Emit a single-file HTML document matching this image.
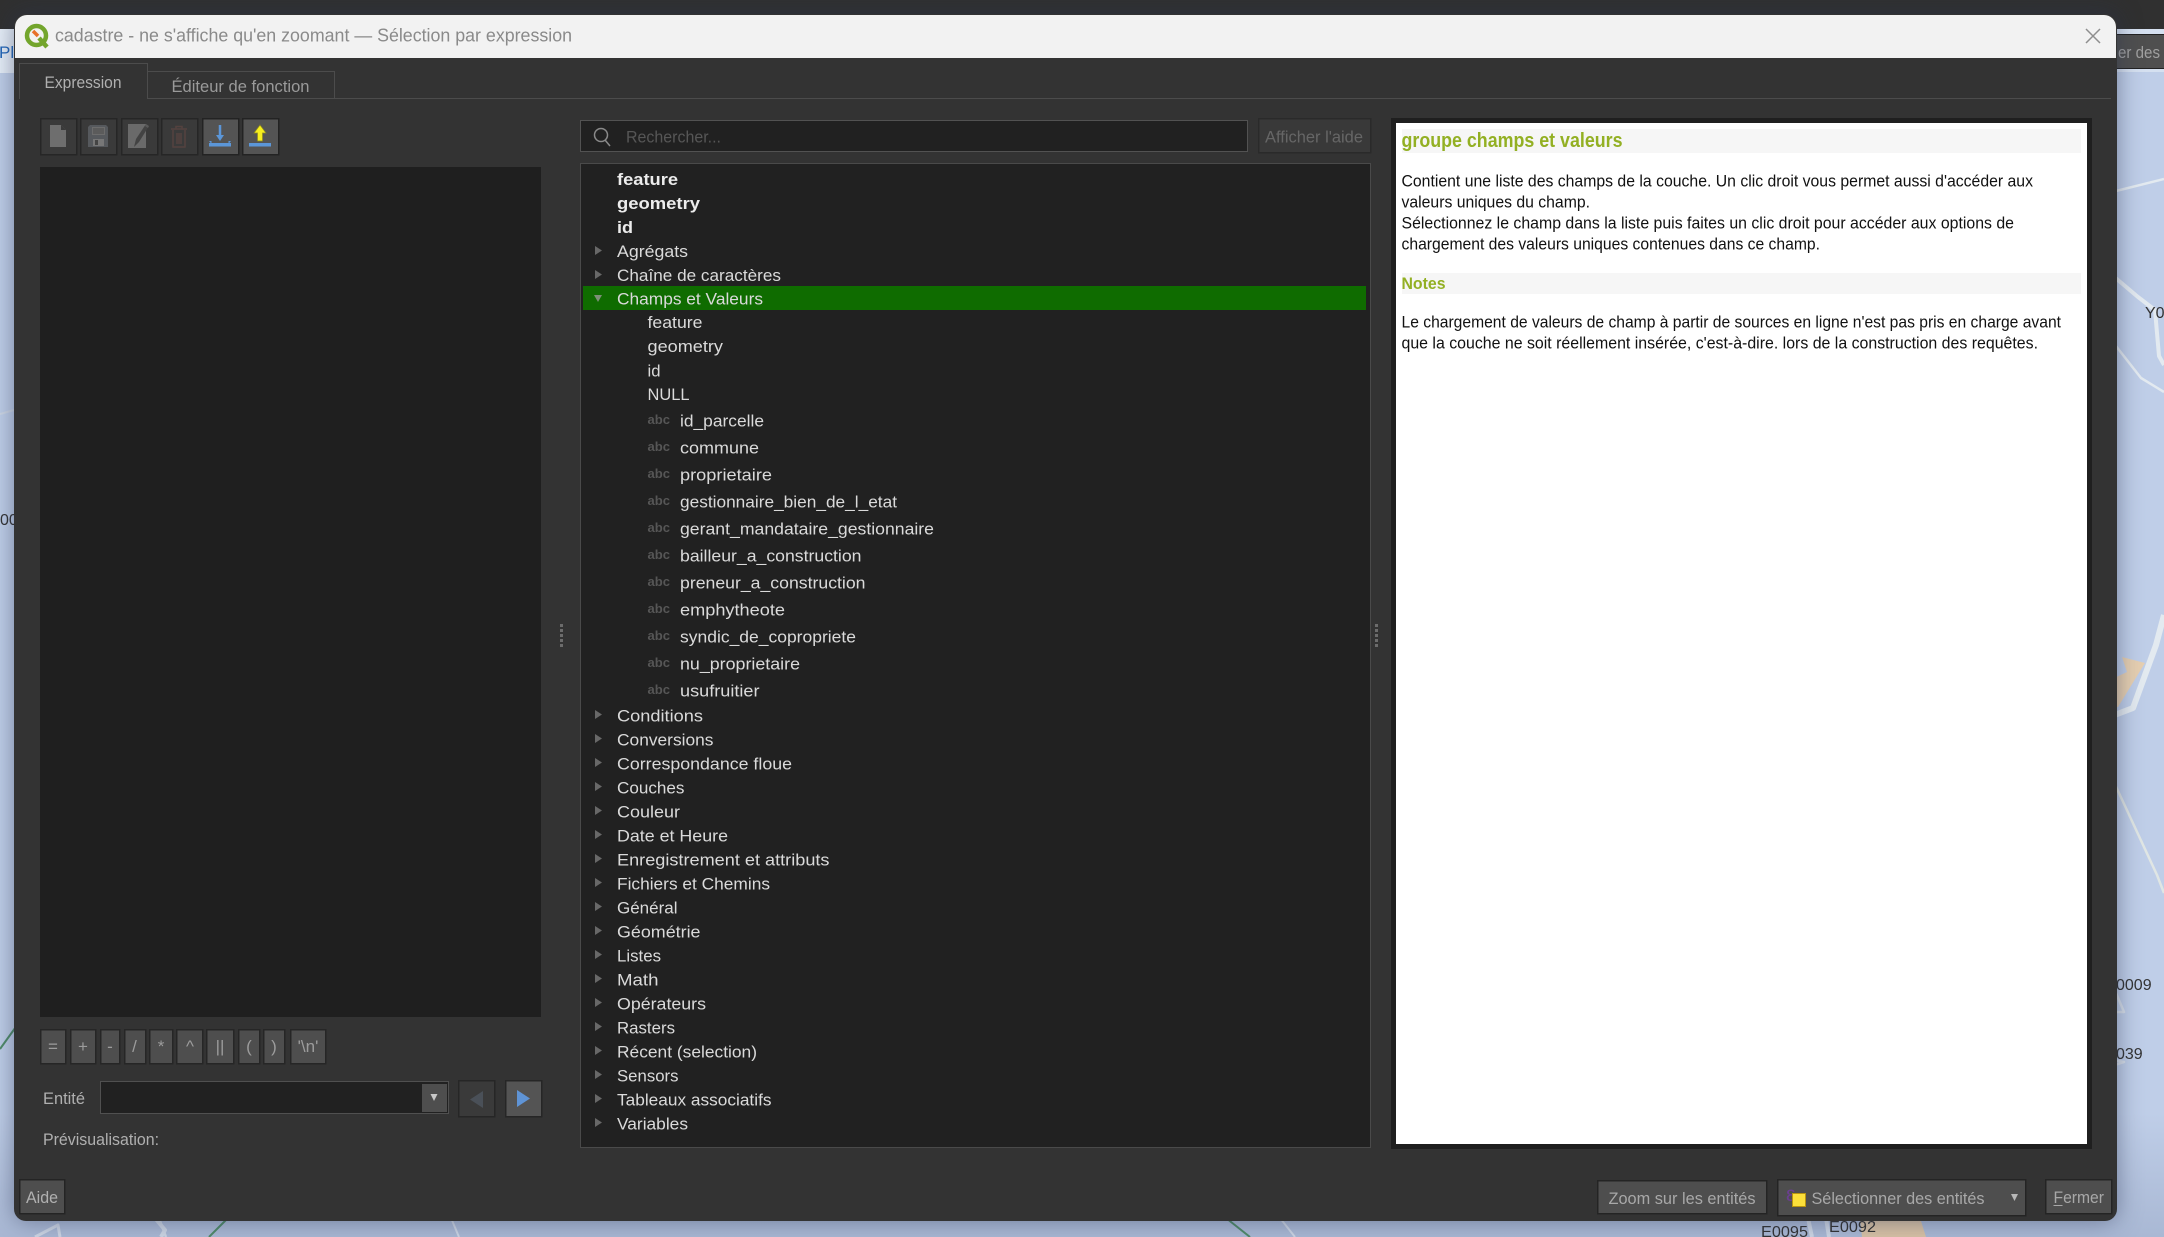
<!DOCTYPE html>
<html lang="fr">
<head>
<meta charset="utf-8">
<title>Sélection par expression</title>
<style>
html,body{margin:0;padding:0;width:2164px;height:1237px;overflow:hidden;background:#c2d1ea}
svg{position:absolute;left:0;top:0;display:block}
#win{position:absolute;left:14px;top:14px;width:2103px;height:1207px;border-radius:12px 12px 12px 12px;background:#333;box-shadow:0 0 24px rgba(40,50,80,.5)}
text{font-family:"Liberation Sans",sans-serif;white-space:pre}
.t{font-size:17px;fill:#dadada}
.b{font-size:17px;fill:#ececec;font-weight:bold}
.abc{font-size:12.5px;fill:#565656;font-weight:bold}
.h{font-size:16.5px;fill:#111}
.u{font-size:17px;fill:#b0b0b0}
.op{font-size:17px;fill:#9c9c9c}
.crisp rect{shape-rendering:crispEdges}
</style>
</head>
<body>
<svg width="2164" height="1237" viewBox="0 0 2164 1237" xmlns="http://www.w3.org/2000/svg">
  <defs>
    <linearGradient id="mb" x1="0" y1="0" x2="0" y2="1"><stop offset="0" stop-color="#bfcee8"/><stop offset=".9" stop-color="#bfcee8"/><stop offset="1" stop-color="#a9b8d4"/></linearGradient>
  </defs>
  <rect width="2164" height="1237" fill="url(#mb)"/>
  <rect width="2164" height="30" fill="#303030"/>
  <rect x="0" y="29" width="14" height="44" fill="#e6eef8"/>
  <text x="-1" y="58" font-size="17" fill="#2266b8">Pl</text>
  <rect x="2117" y="29" width="47" height="43" fill="#d5e0f0"/>
  <rect x="2117" y="34" width="47" height="35" fill="#4f4f4f"/>
  <rect x="2117" y="34" width="47" height="1" fill="#222"/>
  <rect x="2117" y="68" width="47" height="1" fill="#222"/>
  <text x="2118" y="58" font-size="17" fill="#a0a0a0" textLength="42" lengthAdjust="spacingAndGlyphs">er des</text>
  <g fill="none" stroke="#e3eaf0" stroke-linejoin="round">
    <path d="M2112 192L2164 179" stroke-width="2.500"/>
    <path d="M2112 275L2138 297L2155 310L2159 356L2164 365" stroke-width="4"/>
    <path d="M2112 341L2141 378L2164 392" stroke-width="2.500"/>
    <path d="M2164 615L2156 645L2133 708L2112 716" stroke-width="6"/>
    <path d="M2112 778L2157 875L2164 893" stroke-width="2.500" stroke="#e0e6e4"/>
    <path d="M2116 993L2124 1012L2112 1012" stroke-width="2.500" stroke="#d8e0ea"/>
    <path d="M2112 1060L2124 1062L2112 1066" stroke-width="2.500" stroke="#d8e0ea"/>
  </g>
  <g fill="none" stroke="#cdd6e4" stroke-linejoin="round">
    <path d="M159 1218L166 1237" stroke-width="2.500"/>
    <path d="M451 1218L459 1237" stroke-width="2"/>
    <path d="M1280 1218L1295 1237" stroke-width="2"/>
    <path d="M35 1237L58 1225L60 1237" stroke-width="3"/>
    <path d="M155 1218L165 1230L161 1237" stroke-width="4"/>
    <path d="M0 414L14 410" stroke-width="2"/>
    <path d="M1808 1218L1812 1237M1826 1218L1829 1237" stroke-width="4"/>
  </g>
  <polygon points="2122,657 2145,663 2118,707 2110,707 2110,680 2127,672" fill="#e6cfb1"/>
  <polygon points="1860,1218 1920,1218 1926,1237 1862,1237" fill="#d8c2a6"/>
  <g fill="none" stroke="#4f8b68" stroke-width="2">
    <path d="M0 1049L18 1024"/>
    <path d="M228 1218L209 1237"/>
    <path d="M1226 1218L1250 1237"/>
  </g>
  <g fill="#333">
    <text x="0" y="525" font-size="16">00</text>
    <text x="2145" y="318" font-size="16">Y0</text>
    <text x="2116" y="990" font-size="16">0009</text>
    <text x="2116" y="1059" font-size="16">039</text>
    <text x="1761" y="1237" font-size="16" textLength="47" lengthAdjust="spacingAndGlyphs">E0095</text>
    <text x="1829" y="1232" font-size="16" textLength="47" lengthAdjust="spacingAndGlyphs">E0092</text>
  </g>
</svg>

<div id="win"></div>

<svg width="2164" height="1237" viewBox="0 0 2164 1237" xmlns="http://www.w3.org/2000/svg">
  <!-- title bar -->
  <path d="M15 58V27a12 12 0 0 1 12-12H2104a12 12 0 0 1 12 12V58Z" fill="#f2f2f2"/>
  <g fill="none">
    <circle cx="36.500" cy="35.500" r="9.500" stroke="#73a52c" stroke-width="4.500"/>
    <path d="M39 38L47 47" stroke="#73a52c" stroke-width="4.500"/>
    <path d="M33 31L38 36" stroke="#e8702a" stroke-width="3.500"/>
  </g>
  <text x="55" y="41.500" font-size="18" fill="#8a8a8a" textLength="517" lengthAdjust="spacingAndGlyphs">cadastre - ne s'affiche qu'en zoomant — Sélection par expression</text>
  <path d="M2086 29L2100 43M2100 29L2086 43" stroke="#8e8e8e" stroke-width="1.500" fill="none"/>

  <g class="crisp">
    <!-- tabs -->
    <rect x="19" y="98" width="2092" height="1" fill="#4c4c4c"/>
    <rect x="147" y="71" width="187" height="27" fill="#333"/>
    <rect x="147" y="71" width="187" height="1" fill="#4c4c4c"/>
    <rect x="334" y="71" width="1" height="28" fill="#4c4c4c"/>
    <rect x="19" y="63" width="128" height="36" fill="#333"/>
    <rect x="19" y="63" width="128" height="1" fill="#4c4c4c"/>
    <rect x="19" y="63" width="1" height="36" fill="#4c4c4c"/>
    <rect x="147" y="63" width="1" height="36" fill="#4c4c4c"/>

    <!-- toolbar -->
    <g fill="#3a3a3a" stroke="#262626" stroke-width="1.500">
      <rect x="40.500" y="118.500" width="36" height="36"/>
      <rect x="80.500" y="118.500" width="36" height="36"/>
      <rect x="121.500" y="118.500" width="36" height="36"/>
      <rect x="161.500" y="118.500" width="36" height="36"/>
    </g>
    <g fill="#545454" stroke="#232323" stroke-width="1.500">
      <rect x="202.500" y="118.500" width="36" height="36"/>
      <rect x="242.500" y="118.500" width="36" height="36"/>
    </g>

    <!-- editor -->
    <rect x="40" y="167" width="501" height="850" fill="#1f1f1f"/>

    <!-- operators -->
    <g fill="#4e4e4e" stroke="#262626" stroke-width="1.500">
      <rect x="40.500" y="1029.500" width="25" height="34"/>
      <rect x="70.500" y="1029.500" width="25" height="34"/>
      <rect x="100.500" y="1029.500" width="19" height="34"/>
      <rect x="124.500" y="1029.500" width="21" height="34"/>
      <rect x="149.500" y="1029.500" width="23" height="34"/>
      <rect x="176.500" y="1029.500" width="26" height="34"/>
      <rect x="206.500" y="1029.500" width="27" height="34"/>
      <rect x="238.500" y="1029.500" width="21" height="34"/>
      <rect x="263.500" y="1029.500" width="21" height="34"/>
      <rect x="290.500" y="1029.500" width="35" height="34"/>
    </g>

    <!-- combo -->
    <rect x="100.500" y="1081.500" width="348" height="32" fill="#212121" stroke="#505050"/>
    <rect x="422" y="1084" width="25" height="28" fill="#4e4e4e"/>
    <rect x="458.500" y="1080.500" width="36" height="36" fill="#3a3a3a" stroke="#262626" stroke-width="1.500"/>
    <rect x="505.500" y="1080.500" width="36" height="36" fill="#545454" stroke="#262626" stroke-width="1.500"/>

    <!-- search -->
    <rect x="580.500" y="120.500" width="667" height="31" fill="#212121" stroke="#525252"/>
    <rect x="1258.500" y="118.500" width="112" height="34" fill="#393939" stroke="#2a2a2a" stroke-width="1.500"/>

    <!-- tree -->
    <rect x="580.500" y="163.500" width="790" height="984" fill="#212121" stroke="#4a4a4a"/>
    <rect x="583" y="286" width="783" height="24" fill="#0f6c00"/>

    <!-- help -->
    <rect x="1391" y="118" width="701" height="1031" fill="#1f1f1f"/>
    <rect x="1396" y="123" width="691" height="1021" fill="#fff"/>
    <rect x="1402" y="129" width="679" height="24" fill="#f6f6f6"/>
    <rect x="1402" y="273" width="679" height="21" fill="#f6f6f6"/>

    <!-- bottom buttons -->
    <g fill="#4e4e4e" stroke="#242424" stroke-width="1.500">
      <rect x="19.500" y="1179.500" width="45" height="34"/>
      <rect x="1597.500" y="1180.500" width="169" height="33"/>
      <rect x="1777.500" y="1179.500" width="248" height="36"/>
      <rect x="2045.500" y="1179.500" width="66" height="34"/>
    </g>

    <!-- splitters -->
    <g fill="#6c6c6c">
      <rect x="560" y="624" width="3" height="3"/><rect x="560" y="629" width="3" height="3"/><rect x="560" y="634" width="3" height="3"/><rect x="560" y="639" width="3" height="3"/><rect x="560" y="644" width="3" height="3"/>
      <rect x="1375" y="624" width="3" height="3"/><rect x="1375" y="629" width="3" height="3"/><rect x="1375" y="634" width="3" height="3"/><rect x="1375" y="639" width="3" height="3"/><rect x="1375" y="644" width="3" height="3"/>
    </g>
  </g>

  <text x="44.500" y="88" class="u" textLength="77" lengthAdjust="spacingAndGlyphs">Expression</text>
  <text x="171.500" y="92" class="u" style="fill:#9a9a9a" textLength="138" lengthAdjust="spacingAndGlyphs">Éditeur de fonction</text>

  <!-- toolbar icons -->
  <path d="M50 125H61L66 130V147H50Z" fill="#6e6e6e"/>
  <path d="M61 125V130H66Z" fill="#3a3a3a"/>
  <path d="M90 125H106L108 127V147H88V127Z" fill="#56595d"/>
  <rect x="92" y="127" width="13" height="8" fill="#6c6c6c"/>
  <path d="M93 129H104M93 131H104M93 133H104" stroke="#4a4a4a" stroke-width="1"/>
  <rect x="93" y="139" width="11" height="7" fill="#777"/><rect x="95" y="140" width="3" height="5" fill="#444"/>
  <path d="M128 124H146V148H128Z" fill="#6a6a6a"/>
  <path d="M134 147L136 139L146 124L149 126L139 142Z" fill="#434343"/>
  <path d="M146 124L149 126L148 128L145 126Z" fill="#5a5a5a"/>
  <g fill="none" stroke="#54423f" stroke-width="1.500">
    <path d="M171 129H187M176 129V126.500H182V129"/>
    <path d="M173 130V147H185V130"/>
    <path d="M177 133V144M179 133V144M181 133V144"/>
  </g>
  <path d="M220 125V139" stroke="#5b96d8" stroke-width="2.500"/>
  <path d="M216 135L220 141L224 135Z" fill="#5b96d8"/>
  <path d="M209 143H231V146.500H209Z" fill="#5b96d8"/>
  <path d="M209 141H211.500V144M231 141H228.500V144" fill="#5b96d8"/>
  <path d="M260 125L266 133H262.500V141H257.500V133H254Z" fill="#f6ee1e" stroke="#8f8a20" stroke-width=".7"/>
  <path d="M249 143H271V146.500H249Z" fill="#5b96d8"/>

  <!-- operators -->
  <g class="op" text-anchor="middle">
    <text x="53" y="1052" class="op" text-anchor="middle">=</text>
    <text x="83" y="1052" class="op" text-anchor="middle">+</text>
    <text x="110" y="1052" class="op" text-anchor="middle">-</text>
    <text x="134.500" y="1052" class="op" text-anchor="middle">/</text>
    <text x="161" y="1052" class="op" text-anchor="middle">*</text>
    <text x="190" y="1052" class="op" text-anchor="middle">^</text>
    <text x="220" y="1052" class="op" text-anchor="middle">||</text>
    <text x="249" y="1052" class="op" text-anchor="middle">(</text>
    <text x="274" y="1052" class="op" text-anchor="middle">)</text>
    <text x="308" y="1052" class="op" text-anchor="middle">'\n'</text>
  </g>

  <text x="43" y="1104" class="u" textLength="42" lengthAdjust="spacingAndGlyphs">Entité</text>
  <text x="43" y="1145" class="u" textLength="116" lengthAdjust="spacingAndGlyphs">Prévisualisation:</text>
  <path d="M430.500 1094H437.500L434 1101Z" fill="#c8c8c8"/>
  <path d="M483 1091V1108L470 1099.500Z" fill="#4a5058"/>
  <path d="M517 1090V1107L530 1098.500Z" fill="#5f94d6"/>

  <!-- search -->
  <circle cx="601" cy="135" r="6.500" fill="none" stroke="#8a8a8a" stroke-width="1.500"/>
  <path d="M605 140L610 146" stroke="#8a8a8a" stroke-width="1.500"/>
  <text x="626" y="142.500" font-size="17" fill="#565656" textLength="95" lengthAdjust="spacingAndGlyphs">Rechercher...</text>
  <text x="1265" y="142.500" font-size="17" fill="#666" textLength="98" lengthAdjust="spacingAndGlyphs">Afficher l'aide</text>

  <!-- tree -->
  <g>
    <text x="617" y="185" class="b" textLength="61" lengthAdjust="spacingAndGlyphs">feature</text>
    <text x="617" y="209" class="b" textLength="83" lengthAdjust="spacingAndGlyphs">geometry</text>
    <text x="617" y="233" class="b" textLength="16" lengthAdjust="spacingAndGlyphs">id</text>
    <text x="617" y="257" class="t" textLength="71" lengthAdjust="spacingAndGlyphs">Agrégats</text>
    <text x="617" y="281" class="t" textLength="164" lengthAdjust="spacingAndGlyphs">Chaîne de caractères</text>
    <text x="617" y="304.500" class="t" textLength="146" lengthAdjust="spacingAndGlyphs">Champs et Valeurs</text>
    <text x="647.500" y="328" class="t" textLength="55" lengthAdjust="spacingAndGlyphs">feature</text>
    <text x="647.500" y="352" class="t" textLength="75.500" lengthAdjust="spacingAndGlyphs">geometry</text>
    <text x="647.500" y="376.500" class="t" textLength="13" lengthAdjust="spacingAndGlyphs">id</text>
    <text x="647.500" y="400" class="t" textLength="42" lengthAdjust="spacingAndGlyphs">NULL</text>

    <text x="680" y="426.500" class="t" textLength="84" lengthAdjust="spacingAndGlyphs">id_parcelle</text>
    <text x="680" y="453.500" class="t" textLength="79" lengthAdjust="spacingAndGlyphs">commune</text>
    <text x="680" y="480.500" class="t" textLength="92" lengthAdjust="spacingAndGlyphs">proprietaire</text>
    <text x="680" y="507.500" class="t" textLength="217" lengthAdjust="spacingAndGlyphs">gestionnaire_bien_de_l_etat</text>
    <text x="680" y="534.500" class="t" textLength="254" lengthAdjust="spacingAndGlyphs">gerant_mandataire_gestionnaire</text>
    <text x="680" y="561.500" class="t" textLength="181.500" lengthAdjust="spacingAndGlyphs">bailleur_a_construction</text>
    <text x="680" y="588.500" class="t" textLength="185.500" lengthAdjust="spacingAndGlyphs">preneur_a_construction</text>
    <text x="680" y="615.500" class="t" textLength="105" lengthAdjust="spacingAndGlyphs">emphytheote</text>
    <text x="680" y="642.500" class="t" textLength="176" lengthAdjust="spacingAndGlyphs">syndic_de_copropriete</text>
    <text x="680" y="669.500" class="t" textLength="120" lengthAdjust="spacingAndGlyphs">nu_proprietaire</text>
    <text x="680" y="696.500" class="t" textLength="79.500" lengthAdjust="spacingAndGlyphs">usufruitier</text>

    <text x="647.500" y="424" class="abc" textLength="22.500" lengthAdjust="spacingAndGlyphs">abc</text>
    <text x="647.500" y="451" class="abc" textLength="22.500" lengthAdjust="spacingAndGlyphs">abc</text>
    <text x="647.500" y="478" class="abc" textLength="22.500" lengthAdjust="spacingAndGlyphs">abc</text>
    <text x="647.500" y="505" class="abc" textLength="22.500" lengthAdjust="spacingAndGlyphs">abc</text>
    <text x="647.500" y="532" class="abc" textLength="22.500" lengthAdjust="spacingAndGlyphs">abc</text>
    <text x="647.500" y="559" class="abc" textLength="22.500" lengthAdjust="spacingAndGlyphs">abc</text>
    <text x="647.500" y="586" class="abc" textLength="22.500" lengthAdjust="spacingAndGlyphs">abc</text>
    <text x="647.500" y="613" class="abc" textLength="22.500" lengthAdjust="spacingAndGlyphs">abc</text>
    <text x="647.500" y="640" class="abc" textLength="22.500" lengthAdjust="spacingAndGlyphs">abc</text>
    <text x="647.500" y="667" class="abc" textLength="22.500" lengthAdjust="spacingAndGlyphs">abc</text>
    <text x="647.500" y="694" class="abc" textLength="22.500" lengthAdjust="spacingAndGlyphs">abc</text>

    <text x="617" y="721.500" class="t" textLength="86" lengthAdjust="spacingAndGlyphs">Conditions</text>
    <text x="617" y="745.500" class="t" textLength="96.500" lengthAdjust="spacingAndGlyphs">Conversions</text>
    <text x="617" y="769.500" class="t" textLength="175" lengthAdjust="spacingAndGlyphs">Correspondance floue</text>
    <text x="617" y="793.500" class="t" textLength="67.500" lengthAdjust="spacingAndGlyphs">Couches</text>
    <text x="617" y="817.500" class="t" textLength="63" lengthAdjust="spacingAndGlyphs">Couleur</text>
    <text x="617" y="841.500" class="t" textLength="111" lengthAdjust="spacingAndGlyphs">Date et Heure</text>
    <text x="617" y="865.500" class="t" textLength="212.500" lengthAdjust="spacingAndGlyphs">Enregistrement et attributs</text>
    <text x="617" y="889.500" class="t" textLength="153" lengthAdjust="spacingAndGlyphs">Fichiers et Chemins</text>
    <text x="617" y="913.500" class="t" textLength="60.500" lengthAdjust="spacingAndGlyphs">Général</text>
    <text x="617" y="937.500" class="t" textLength="83.500" lengthAdjust="spacingAndGlyphs">Géométrie</text>
    <text x="617" y="961.500" class="t" textLength="44" lengthAdjust="spacingAndGlyphs">Listes</text>
    <text x="617" y="985.500" class="t" textLength="41.500" lengthAdjust="spacingAndGlyphs">Math</text>
    <text x="617" y="1009.500" class="t" textLength="89" lengthAdjust="spacingAndGlyphs">Opérateurs</text>
    <text x="617" y="1033.500" class="t" textLength="58" lengthAdjust="spacingAndGlyphs">Rasters</text>
    <text x="617" y="1057.500" class="t" textLength="140" lengthAdjust="spacingAndGlyphs">Récent (selection)</text>
    <text x="617" y="1081.500" class="t" textLength="61.500" lengthAdjust="spacingAndGlyphs">Sensors</text>
    <text x="617" y="1105.500" class="t" textLength="154.500" lengthAdjust="spacingAndGlyphs">Tableaux associatifs</text>
    <text x="617" y="1129.500" class="t" textLength="71" lengthAdjust="spacingAndGlyphs">Variables</text>
  </g>
  <g fill="#686868">
    <path d="M595 246V255L602 250.500Z"/>
    <path d="M595 270V279L602 274.500Z"/>
    <path d="M595 710V719L602 714.500Z"/>
    <path d="M595 734V743L602 738.500Z"/>
    <path d="M595 758V767L602 762.500Z"/>
    <path d="M595 782V791L602 786.500Z"/>
    <path d="M595 806V815L602 810.500Z"/>
    <path d="M595 830V839L602 834.500Z"/>
    <path d="M595 854V863L602 858.500Z"/>
    <path d="M595 878V887L602 882.500Z"/>
    <path d="M595 902V911L602 906.500Z"/>
    <path d="M595 926V935L602 930.500Z"/>
    <path d="M595 950V959L602 954.500Z"/>
    <path d="M595 974V983L602 978.500Z"/>
    <path d="M595 998V1007L602 1002.500Z"/>
    <path d="M595 1022V1031L602 1026.500Z"/>
    <path d="M595 1046V1055L602 1050.500Z"/>
    <path d="M595 1070V1079L602 1074.500Z"/>
    <path d="M595 1094V1103L602 1098.500Z"/>
    <path d="M595 1118V1127L602 1122.500Z"/>
  </g>
  <path d="M594 295H602L598 302Z" fill="#7c8f76"/>

  <!-- help text -->
  <text x="1401.500" y="147" font-size="20" font-weight="bold" fill="#93b023" textLength="221" lengthAdjust="spacingAndGlyphs">groupe champs et valeurs</text>
  <text x="1401.500" y="186.500" class="h" textLength="631.500" lengthAdjust="spacingAndGlyphs">Contient une liste des champs de la couche. Un clic droit vous permet aussi d'accéder aux</text>
  <text x="1401.500" y="207.500" class="h" textLength="188.500" lengthAdjust="spacingAndGlyphs">valeurs uniques du champ.</text>
  <text x="1401.500" y="228.500" class="h" textLength="612.500" lengthAdjust="spacingAndGlyphs">Sélectionnez le champ dans la liste puis faites un clic droit pour accéder aux options de</text>
  <text x="1401.500" y="249.500" class="h" textLength="418.500" lengthAdjust="spacingAndGlyphs">chargement des valeurs uniques contenues dans ce champ.</text>
  <text x="1401.500" y="289" font-size="16.500" font-weight="bold" fill="#93b023" textLength="44" lengthAdjust="spacingAndGlyphs">Notes</text>
  <text x="1401.500" y="327.500" class="h" textLength="659.500" lengthAdjust="spacingAndGlyphs">Le chargement de valeurs de champ à partir de sources en ligne n'est pas pris en charge avant</text>
  <text x="1401.500" y="348.500" class="h" textLength="636.500" lengthAdjust="spacingAndGlyphs">que la couche ne soit réellement insérée, c'est-à-dire. lors de la construction des requêtes.</text>

  <!-- bottom buttons -->
  <text x="26" y="1203" class="u" textLength="32" lengthAdjust="spacingAndGlyphs">Aide</text>
  <text x="1608.500" y="1204" class="u" style="fill:#a8a8a8" textLength="147" lengthAdjust="spacingAndGlyphs">Zoom sur les entités</text>
  <text x="1786" y="1201" font-size="21" fill="#6a3f90">ε</text>
  <rect x="1792.500" y="1193.500" width="13" height="13" fill="#fbdf3a" stroke="#b89410"/>
  <text x="1811.500" y="1204" class="u" style="fill:#a8a8a8" textLength="173" lengthAdjust="spacingAndGlyphs">Sélectionner des entités</text>
  <path d="M2011 1194H2018L2014.500 1201Z" fill="#b8b8b8"/>
  <text x="2053.500" y="1203" class="u" style="fill:#a8a8a8" textLength="50.500" lengthAdjust="spacingAndGlyphs">Fermer</text>
  <rect x="2053.500" y="1205" width="9" height="1" fill="#a8a8a8"/>
</svg>
</body>
</html>
